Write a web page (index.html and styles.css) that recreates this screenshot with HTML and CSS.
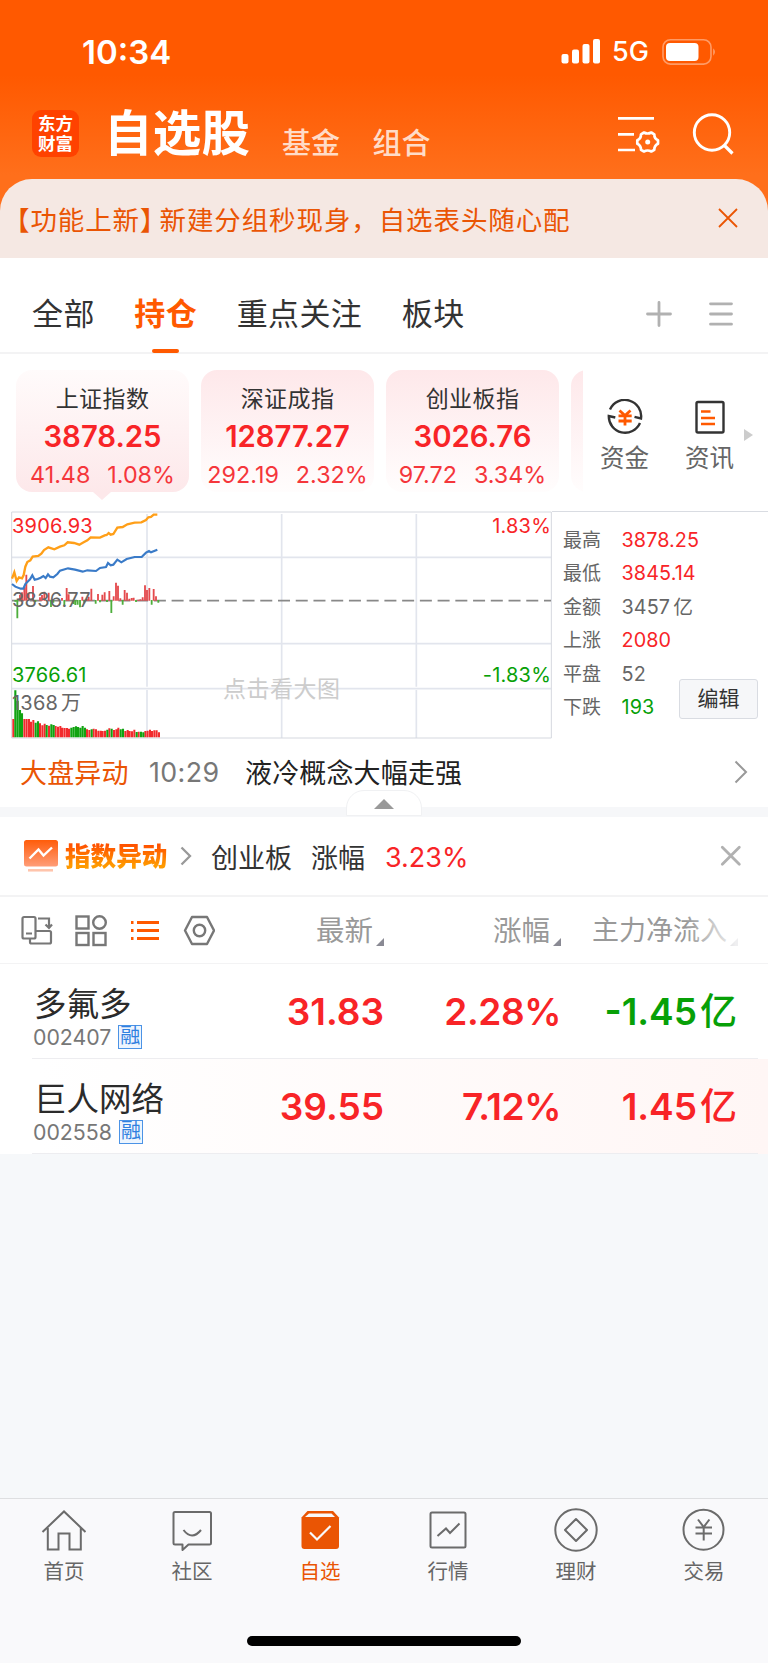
FILE: index.html
```html
<!DOCTYPE html>
<html lang="zh-CN">
	<head>
		<meta charset="utf-8">
		<title>自选股</title>
		<meta name="viewport" content="width=device-width, initial-scale=1.0">
		<link rel="stylesheet" href="styles.css">
	</head>
	<body>
		<div class="top">
			<div class="status">
				<span class="time">10:34</span>
				<svg class="signal" width="40" height="26" viewBox="0 0 40 26" fill="#fff">
					<rect x="0.5" y="15" width="7" height="9.5" rx="2"/>
					<rect x="11" y="10.5" width="7" height="14" rx="2"/>
					<rect x="21.5" y="5" width="7" height="19.5" rx="2"/>
					<rect x="32" y="0" width="7" height="24.5" rx="2"/>
				</svg>
				<span class="net">5G</span>
				<svg class="battery" width="56" height="28" viewBox="0 0 56 28">
					<rect x="1" y="1.7" width="48" height="24.4" rx="7.5" fill="none" stroke="#fff" stroke-opacity=".4" stroke-width="1.6"/>
					<rect x="4" y="5" width="32.5" height="18" rx="4" fill="#fff"/>
					<path d="M51.3 10.2q3 3.5 0 7.6z" fill="#fff" fill-opacity=".5"/>
				</svg>
			</div>
			<div class="titlebar">
				<div class="logo">东方<br>财富</div>
				<h1>自选股</h1>
				<span class="sub">基金</span>
				<span class="sub">组合</span>
				<svg class="setting" width="44" height="40" viewBox="0 0 44 40" fill="none" stroke="#fff" stroke-width="2.7">
					<path d="M1 3.3H37M1 19.3H17M1 35H18"/>
					<path d="M27 17.5q3.5 2 7.3 0l3 1.8q-.1 4.4 3.7 6v3.5q-3.8 1.8-3.7 6l-3 1.7q-3.8-2-7.3 0l-3-1.7q.1-4.2-3.7-6v-3.5q3.8-1.6 3.7-6z" stroke-linejoin="round"/>
					<circle cx="30.7" cy="27" r="2.5" fill="#fff" stroke="none"/>
				</svg>
				<svg class="search" width="44" height="44" viewBox="0 0 44 44" fill="none" stroke="#fff" stroke-width="2.9">
					<circle cx="20" cy="20.5" r="17.7"/>
					<path d="M32 33l8.5 8.5" stroke-width="3.2"/>
				</svg>
			</div>
			<div class="notice">
				<span><span class="bracket">【功能上新<i>】</i></span>新建分组秒现身，自选表头随心配</span>
				<svg width="20" height="20" viewBox="0 0 20 20" fill="none" stroke="#ea5504" stroke-width="1.8"><path d="M1 1l18 18M19 1l-18 18"/></svg>
			</div>
		</div>

		<div class="tabs">
			<span>全部</span>
			<span class="active">持仓</span>
			<span>重点关注</span>
			<span>板块</span>
			<svg class="plus" width="26" height="26" viewBox="0 0 26 26" stroke="#b1b1b1" stroke-width="2.8" stroke-linecap="round"><path d="M1.5 13h23M13 1.5v23"/></svg>
			<svg class="menu" width="24" height="26" viewBox="0 0 24 26" stroke="#b1b1b1" stroke-width="2.8" stroke-linecap="round"><path d="M1.5 2.8h21M1.5 13h21M1.5 23.2h21"/></svg>
		</div>

		<div class="indexes">
			<div class="cards">
				<div class="card selected"><b>上证指数</b><strong>3878.25</strong><p><span>41.48</span><span>1.08%</span></p></div>
				<div class="card"><b>深证成指</b><strong>12877.27</strong><p><span>292.19</span><span>2.32%</span></p></div>
				<div class="card"><b>创业板指</b><strong>3026.76</strong><p><span>97.72</span><span>3.34%</span></p></div>
				<div class="card"></div>
			</div>
			<div class="tool">
				<svg width="36" height="36" viewBox="0 0 36 36" fill="none" stroke="#333" stroke-width="2.4">
					<path d="M3 10.500A16.3 16.3 0 0 1 34 19.500L27.5 17.8M33 24A16.3 16.3 0 0 1 1.8 17L8.3 18.5"/>
					<g stroke="#ff5900" stroke-width="2.8"><path d="M12.5 11.5l5.500 5 5.500-5M18 16.500V26.500M11.500 16.800h13.200M11.500 22h13.200"/></g>
				</svg>
				资金
			</div>
			<div class="tool">
				<svg width="36" height="36" viewBox="0 0 36 36" fill="none" stroke="#333" stroke-width="2.4">
					<rect x="4.5" y="3" width="27" height="30.5" rx="1.5"/>
					<path d="M9 12.500h9.500M9 19h14M9 25h14" stroke="#ff5900" stroke-width="2.7"/>
				</svg>
				资讯
			</div>
			<i class="next"></i>
		</div>

		<div class="market">
			<div class="chart">
				<svg width="541" height="228" viewBox="33 33 1623 684" fill="none">
					<g stroke="#e2e5ed" stroke-width="5">
						<path d="M441 42V560M845 42V560M1249 42V560M441 570V714M845 570V714M1249 570V714"/>
						<path d="M36 172H1653M36 431H1653M36 566H1653"/>
					</g>
					<path d="M35 36H1654V714H35z" stroke="#d5d8df" stroke-width="3"/>
					<path d="M36 302H1653" stroke="#888" stroke-width="5" stroke-dasharray="36 17.2"/>
					<!-- buy / sell strength -->
					<path stroke="#e4494c" stroke-width="5.5" d="M60 302V284M66 302V277M73 302V262M79 302V224M86 302V280M99 302V258M120 302V292M126 302V285M133 302V275M146 302V278M186 302V294M200 302V264M206 302V283M247 302V290M260 302V296M266 302V290M274 302V266M294 302V282M307 302V284M314 302V277M328 302V273M341 302V289M348 302V248M354 302V257M361 302V295M374 302V270M381 302V278M388 302V296M395 302V294M401 302V293M415 302V299M421 302V298M428 302V292M435 302V256M441 302V270M448 302V264M461 302V267M468 302V289"/>
					<path stroke="#4dae3c" stroke-width="5.5" d="M46 300V305M52 300V355M106 300V306M153 300V321M160 300V308M193 300V316M220 300V312M226 300V315M233 300V314M240 300V322M253 300V310M287 300V311M300 300V307M321 300V306M334 300V339M368 300V314M408 300V306M455 300V314M475 300V308"/>
					<!-- volume -->
					<path stroke="#f22a2d" stroke-width="6" d="M40 712V657M73 712V657M80 712V657M87 712V657M93 712V665M100 712V660M120 712V670M127 712V676M134 712V671M147 712V677M167 712V678M174 712V680M181 712V678M187 712V683M194 712V684M201 712V684M207 712V686M261 712V688M268 712V690M281 712V686M288 712V688M295 712V692M302 712V692M308 712V693M315 712V692M328 712V685M342 712V690M349 712V688M355 712V683M376 712V693M383 712V690M389 712V693M396 712V694M403 712V689M416 712V695M436 712V693M443 712V692M450 712V689M456 712V693M463 712V691M470 712V691M477 712V697"/>
					<path stroke="#11a311" stroke-width="6.3" d="M46 712V571M53 712V602M60 712V630M66 712V640M107 712V668M114 712V664M140 712V675M154 712V673M161 712V675M214 712V683M221 712V681M228 712V679M234 712V681M241 712V683M248 712V678M255 712V683M275 712V688M322 712V689M335 712V686M362 712V688M369 712V686M410 712V696M423 712V695M430 712V697"/>
					<polyline stroke="#3a7bc8" stroke-width="6.5" points="36,252 46,260 62,266 70,266 76,252 90,238 97,226 104,239 113,237 122,233 130,228 137,234 144,223 150,230 160,232 172,222 180,212 204,205 225,209 248,215 262,211 288,213 300,204 318,201 324,189 332,196 340,194 352,179 364,187 380,177 404,171 425,171 438,158 447,153 453,157 472,149"/>
					<polyline stroke="#ff9f18" stroke-width="7" points="36,236 43,217 50,243 57,232 66,235 71,225 76,200 82,186 91,181 98,170 115,168 124,161 132,150 145,142 163,148 180,140 193,136 203,127 222,129 238,134 251,127 262,121 272,112 300,113 314,106 320,105 326,99 332,104 340,102 352,83 368,81 382,73 404,68 424,67 438,60 445,52 453,51 461,44 472,44"/>
				</svg>
				<span class="mark high red">3906.93</span>
				<span class="mark mid">3836.77</span>
				<span class="mark low green">3766.61</span>
				<span class="mark vol">1368<i>万</i></span>
				<span class="mark pct red">1.83%</span>
				<span class="mark npct green">-1.83%</span>
				<span class="hint">点击看大图</span>
			</div>
			<div class="facts">
				<p><b>最高</b><span class="red">3878.25</span></p>
				<p><b>最低</b><span class="red">3845.14</span></p>
				<p><b>金额</b><span>3457<i>亿</i></span></p>
				<p><b>上涨</b><span class="red">2080</span></p>
				<p><b>平盘</b><span>52</span></p>
				<p><b>下跌</b><span class="green">193</span></p>
				<button class="edit">编辑</button>
			</div>
		</div>

		<div class="news">
			<span class="tag">大盘异动</span>
			<span class="when">10:29</span>
			<span class="text">液冷概念大幅走强</span>
			<svg width="14" height="24" viewBox="0 0 14 24" fill="none" stroke="#999" stroke-width="2"><path d="M1.5 1.5L12 12 1.5 22.5"/></svg>
			<div class="fold"><i></i></div>
		</div>

		<div class="alert">
			<svg class="pic" width="36" height="34" viewBox="0 0 36 34" fill="none">
				<defs><linearGradient id="g" x2="0" y2="1"><stop offset="0" stop-color="#ff5c0a"/><stop offset="1" stop-color="#ff9d78"/></linearGradient></defs>
				<rect x="1" y="1" width="34" height="26.5" rx="2.5" fill="url(#g)"/>
				<path d="M6.5 19.5l9-9 5 6 8.5-8" stroke="#fff" stroke-width="2.4"/>
				<path d="M5 31.3h25" stroke="#ffc4ab" stroke-width="2.5"/>
			</svg>
			<span class="label">指数异动</span>
			<svg class="arrow" width="12" height="20" viewBox="0 0 12 20" fill="none" stroke="#999" stroke-width="2.3"><path d="M1.5 1.5L10 10 1.5 18.5"/></svg>
			<span class="board">创业板</span>
			<span class="kind">涨幅</span>
			<span class="rate red">3.23%</span>
			<svg class="close" width="22" height="22" viewBox="0 0 22 22" fill="none" stroke="#b1b1b1" stroke-width="2.8" stroke-linecap="round"><path d="M2.3 2.3l17 17M19.3 2.3l-17 17"/></svg>
		</div>

		<div class="thead">
			<svg width="32" height="32" viewBox="0 0 32 32" fill="none" stroke="#777" stroke-width="2.2">
				<rect x="1.5" y="2" width="13" height="21.5" rx="1.5"/>
				<path d="M5 18.5h6M17 3.500H28V12.500M24.500 9.500L28 13l3-3.500M15 16H28.500q1.500 0 1.500 1.500V27q0 1.500-1.500 1.500H10.500Q9 28.500 9 27V24"/>
			</svg>
			<svg width="32" height="32" viewBox="0 0 32 32" fill="none" stroke="#777" stroke-width="2.4">
				<rect x="1.5" y="1.5" width="12" height="12"/><circle cx="24.5" cy="7.5" r="6.3"/>
				<rect x="1.5" y="18" width="12" height="12"/><rect x="18.5" y="18" width="12" height="12"/>
			</svg>
			<svg width="32" height="32" viewBox="0 0 32 32" fill="none" stroke="#ff5900" stroke-width="3">
				<path d="M2 7.500h2.500M8 7.500h22M2 15.500h2.500M8 15.500h22M2 23.500h2.500M8 23.500h22"/>
			</svg>
			<svg width="32" height="32" viewBox="0 0 32 32" fill="none" stroke="#777" stroke-width="2.4" stroke-linejoin="round">
				<path d="M9 2H24L31 15.500 24 29H9L2 15.500z"/><circle cx="16.5" cy="15.5" r="5.7"/>
			</svg>
			<span class="c1">最新<i></i></span>
			<span class="c2">涨幅<i></i></span>
			<span class="c3">主力净流入<i></i></span>
		</div>

		<div class="stock">
			<div class="name"><b>多氟多</b><p>002407<em>融</em></p></div>
			<span class="c1 red">31.83</span>
			<span class="c2 red">2.28%</span>
			<span class="c3 green">-1.45<i>亿</i></span>
		</div>
		<div class="stock up">
			<div class="name"><b>巨人网络</b><p>002558<em>融</em></p></div>
			<span class="c1 red">39.55</span>
			<span class="c2 red">7.12%</span>
			<span class="c3 red">1.45<i>亿</i></span>
		</div>

		<div class="nav">
			<div class="items">
				<div>
					<svg width="46" height="46" viewBox="0 0 46 46" fill="none" stroke="#6b6b6b" stroke-width="2">
						<path d="M1.5 24L23 3.500 44.500 24M6.800 20V41.500H17.500V25.500H28.500V41.500H39.800V20"/>
					</svg>
					首页
				</div>
				<div>
					<svg width="46" height="46" viewBox="0 0 46 46" fill="none" stroke="#6b6b6b" stroke-width="2" stroke-linejoin="round">
						<path d="M6 4H40.500Q42 4 42 5.500V35Q42 36.500 40.500 36.500H19.500L13.500 42V36.500H6Q4.500 36.500 4.500 35V5.500Q4.500 4 6 4z"/>
						<path d="M14.500 22Q23 33 32 22"/>
					</svg>
					社区
				</div>
				<div class="on">
					<svg width="46" height="46" viewBox="0 0 46 46" fill="none">
						<path d="M10.500 3H36L42 9.500V38Q42 41 39 41H7.500Q4.500 41 4.500 38V9.500z" fill="#ea5504"/>
						<path d="M12 5.500H34.500L38 9H8z" fill="#f9f9fb"/>
						<path d="M13 24.500l7 7L33.500 18" stroke="#f9f9fb" stroke-width="2.2"/>
					</svg>
					自选
				</div>
				<div>
					<svg width="46" height="46" viewBox="0 0 46 46" fill="none" stroke="#6b6b6b" stroke-width="2">
						<rect x="5.5" y="4.5" width="35" height="35" rx="1.5"/>
						<path d="M12.500 28l8.500-7.500 4 4.500 9.500-9.500"/>
					</svg>
					行情
				</div>
				<div>
					<svg width="46" height="46" viewBox="0 0 46 46" fill="none" stroke="#6b6b6b" stroke-width="2" stroke-linejoin="round">
						<circle cx="23" cy="22" r="20.7"/><path d="M23 11L34 22 23 33 12 22z"/>
					</svg>
					理财
				</div>
				<div>
					<svg width="46" height="46" viewBox="0 0 46 46" fill="none" stroke="#6b6b6b" stroke-width="2">
						<circle cx="22.5" cy="21.7" r="20"/><path d="M17 11.500l5.700 7.500 5.700-7.500M22.700 19V32.500M14.500 19.500h16.500M14.500 25.500h16.500"/>
					</svg>
					交易
				</div>
			</div>
			<div class="home"></div>
		</div>
	</body>
</html>
```
FILE: styles.css
```css
* {
	box-sizing: border-box;
}
body {
	width: 768px;
	height: 1663px;
	margin: 0;
	display: flex;
	flex-direction: column;
	font-family: Inter, "Noto Sans CJK SC", sans-serif;
	color: #333;
	background: #f6f8fa;
	overflow: hidden;
	white-space: nowrap;
}
svg {
	display: block;
	flex: none;
}
p, h1 {
	margin: 0;
}
i, em {
	font-style: normal;
}
b {
	font-weight: 400;
}
.red {
	color: #f82427;
}
.green {
	color: #07a007;
}

/* header */
.top {
	height: 258px;
	background: linear-gradient(#ff5900 0, #ff5900 75px, #ff6f1b 175px);
}
.status {
	height: 103px;
	display: flex;
	align-items: center;
	color: #fff;
}
.time {
	width: 479px;
	padding-left: 82px;
	font-size: 33px;
	font-weight: 600;
}
.signal {
	margin-left: 82px;
}
.net {
	width: 61px;
	padding-left: 11px;
	font-size: 27px;
	font-weight: 500;
}
.titlebar {
	height: 76px;
	display: flex;
	align-items: flex-start;
	color: #fff;
}
.logo {
	width: 47px;
	height: 47px;
	margin: 7px 0 0 32px;
	padding-top: 4px;
	border-radius: 9px;
	background: #ff4200;
	text-align: center;
	font-size: 17.5px;
	font-weight: 700;
	line-height: 19.5px;
}
h1 {
	width: 176px;
	padding-left: 25px;
	font-size: 48.5px;
	font-weight: 700;
	line-height: 62px;
	letter-spacing: .2px;
}
.sub {
	width: 90.5px;
	padding: 21px 0 0 27px;
	color: #ffdcc8;
	font-size: 29px;
	font-weight: 500;
	line-height: 40px;
}
.setting {
	margin: 12px 0 0 181px;
}
.search {
	margin: 9px 0 0 31px;
}
.notice {
	height: 79px;
	padding: 0 30px 1px 3px;
	display: flex;
	align-items: center;
	justify-content: space-between;
	border-radius: 32px 32px 0 0;
	background: #f5e8e3;
	color: #ea5504;
	font-size: 26.5px;
	letter-spacing: .9px;
}
.bracket i {
	letter-spacing: -7px;
}

/* group tabs */
.tabs {
	height: 96px;
	padding: 0 35px 0 32px;
	display: flex;
	align-items: center;
	gap: 39.5px;
	background: #fff;
	border-bottom: 2px solid #f3f3f4;
	font-size: 31px;
	letter-spacing: .4px;
}
.tabs span {
	height: 96px;
	line-height: 114px;
	position: relative;
}
.tabs .active {
	color: #ff5900;
	font-weight: 600;
}
.active::after {
	content: "";
	position: absolute;
	left: 18px;
	bottom: 0;
	width: 27px;
	height: 4px;
	border-radius: 2px;
	background: #ff5900;
}
.plus {
	margin: 17px 0 0 auto;
}
.menu {
	margin: 17px 0 0 -2px;
}

/* index cards */
.indexes {
	height: 157px;
	padding: 15.5px 0 0 16px;
	display: flex;
	background: #fff;
}
.cards {
	width: 567px;
	height: 135px;
	display: flex;
	gap: 12px;
	overflow: hidden;
}
.card {
	flex: none;
	width: 173px;
	height: 122px;
	padding-top: 12px;
	position: relative;
	border-radius: 16px;
	background: linear-gradient(#fee8ea, #fffdfd);
	text-align: center;
}
.selected {
	background: linear-gradient(#fffbfb, #fde8ea);
}
.selected::after {
	content: "";
	position: absolute;
	left: 77px;
	top: 122px;
	border: 9px solid transparent;
	border-top: 8px solid #fde8ea;
	border-bottom: 0;
}
.card b {
	display: block;
	font-size: 23px;
	line-height: 34px;
	letter-spacing: .4px;
}
.card strong {
	display: block;
	color: #f82427;
	font-size: 29.3px;
	font-weight: 600;
	line-height: 42px;
}
.card p {
	display: flex;
	justify-content: center;
	gap: 17px;
	color: #f5363b;
	font-size: 23.3px;
	line-height: 34px;
}
.tool {
	width: 85px;
	padding-top: 29px;
	display: flex;
	flex-direction: column;
	align-items: center;
	position: relative;
	left: -1px;
	color: #666;
	font-size: 24.5px;
	line-height: 47px;
}
.next {
	margin: 59px 0 0 -9px;
	width: 0;
	height: 0;
	border: 6.5px solid transparent;
	border-left: 9px solid #ccc;
	border-right: 0;
}

/* chart and figures */
.market {
	height: 229px;
	padding-left: 11px;
	display: flex;
	background: #fff;
}
.chart {
	width: 541px;
	position: relative;
}
.mark {
	position: absolute;
	left: 1px;
	font-size: 20px;
	line-height: 24px;
	letter-spacing: .2px;
}
.mid, .vol {
	color: #666;
}
.high, .pct {
	top: 3px;
}
.mid {
	top: 77px;
}
.low, .npct {
	top: 152px;
}
.vol {
	top: 180px;
}
.mark i, .facts i {
	margin-left: 3px;
}
.pct, .npct {
	left: auto;
	right: 1px;
}
.hint {
	position: absolute;
	left: 212px;
	top: 160px;
	color: #ccc;
	font-size: 23px;
	line-height: 36px;
	letter-spacing: .5px;
}
.facts {
	flex: 1;
	padding: 12px 0 0 11px;
	position: relative;
	border-top: 1px solid #d9dce2;
	color: #666;
}
.facts p {
	display: flex;
	font-size: 19.8px;
	line-height: 33.4px;
	letter-spacing: .1px;
}
.facts b {
	width: 58.5px;
	font-size: 19px;
}
.edit {
	position: absolute;
	left: 127px;
	top: 167px;
	width: 79px;
	height: 40px;
	padding: 0;
	border: 1px solid #d9dce2;
	border-radius: 3px;
	background: #f6f7f9;
	color: #333;
	font: 21px/36px Inter, "Noto Sans CJK SC", sans-serif;
}

/* news line */
.news {
	height: 77px;
	padding: 0 20px 4px 20px;
	display: flex;
	align-items: center;
	position: relative;
	background: #fff;
	border-bottom: 10px solid #f6f7f9;
	color: #222;
	font-size: 27px;
	letter-spacing: .15px;
}
.tag {
	width: 129px;
	color: #ea5504;
}
.when {
	width: 96px;
	color: #777;
	font-size: 26.8px;
	letter-spacing: .4px;
}
.news svg {
	margin-left: auto;
}
.fold {
	position: absolute;
	left: 346px;
	top: 50px;
	width: 76px;
	height: 26px;
	padding: 8px 0 0 27px;
	border: 1px solid #f0f1f3;
	border-radius: 18px 18px 0 0;
	background: #fff;
}
.fold i {
	display: block;
	width: 0;
	border: 10px solid transparent;
	border-top: 0;
	border-bottom: 10px solid #999;
}

/* index alert */
.alert {
	height: 80px;
	padding: 0 26px 0 23px;
	display: flex;
	align-items: center;
	background: #fff;
	border-bottom: 2px solid #f3f3f4;
	font-size: 27px;
}
.label {
	width: 115px;
	margin: -3px 0 0 6px;
	font-size: 25.6px;
	font-weight: 900;
	background: linear-gradient(#ff5200 25%, #ff9a00 80%);
	-webkit-background-clip: text;
	background-clip: text;
	color: transparent;
}
.board {
	margin-left: 19px;
	width: 100px;
}
.kind {
	width: 74px;
}
.rate {
	padding-top: 2px;
}
.close {
	margin-left: auto;
}

/* stock table */
.thead {
	height: 67px;
	padding: 2px 0 0 21px;
	display: flex;
	align-items: center;
	gap: 22px;
	position: relative;
	background: #fff;
	border-bottom: 1.5px solid #f3f3f4;
	color: #999;
	font-size: 28.5px;
}
.thead span {
	display: flex;
	align-items: flex-end;
	line-height: 42px;
	margin-right: -22px;
}
.thead i {
	margin: 0 0 6px 3px;
	border: 4px solid #8a8a94;
	border-top-color: transparent;
	border-left-color: transparent;
}
.thead .c1 {
	width: 147px;
	justify-content: flex-end;
}
.thead .c2 {
	width: 177px;
	justify-content: flex-end;
}
.thead .c3 {
	width: 177px;
	justify-content: flex-end;
	font-size: 27px;
}
.thead::after {
	content: "";
	position: absolute;
	right: 20px;
	top: 10px;
	width: 62px;
	height: 48px;
	background: linear-gradient(90deg, #fff0, #fffd 80%);
}
.stock {
	height: 95px;
	display: flex;
	align-items: center;
	position: relative;
	background: #fff;
	font-size: 37px;
	font-weight: 600;
}
.stock::after {
	content: "";
	position: absolute;
	left: 32px;
	right: 10px;
	bottom: 0;
	height: 1.5px;
	background: #ededf0;
}
.up {
	background: linear-gradient(90deg, #fff 5%, #fff6f5);
}
.name {
	width: 230px;
	padding: 13px 0 0 33px;
	font-weight: 400;
}
.name b {
	display: block;
	margin-left: 1px;
	color: #2b2b2b;
	font-size: 32.5px;
	line-height: 38px;
}
.name p {
	display: flex;
	align-items: center;
	color: #777;
	font-size: 21.3px;
	line-height: 26px;
}
.name em {
	width: 24px;
	height: 24px;
	margin-left: 7px;
	border: 1px solid #4b93e6;
	background: #edf5fe;
	color: #2f80e0;
	font-size: 20px;
	line-height: 21px;
	text-align: center;
}
.stock > span {
	height: 48px;
	line-height: 48px;
	text-align: right;
}
.stock .c1 {
	width: 154px;
}
.stock .c2 {
	width: 177px;
	letter-spacing: -.4px;
}
.stock .c3 {
	width: 176px;
}
.c3 i {
	margin-left: 3px;
	font-weight: 500;
	font-size: 37px;
	line-height: 1;
}

/* bottom navigation */
.nav {
	height: 165px;
	margin-top: auto;
	border-top: 1px solid #dedfe1;
	background: #f9f9fb;
}
.items {
	height: 137px;
	padding-top: 9px;
	display: flex;
}
.items div {
	width: 128px;
	display: flex;
	flex-direction: column;
	align-items: center;
	color: #666;
	font-size: 20.5px;
	line-height: 36px;
}
.items .on {
	color: #ea5504;
}
.home {
	width: 274px;
	height: 10px;
	margin: 0 auto;
	border-radius: 5px;
	background: #000;
}
```
